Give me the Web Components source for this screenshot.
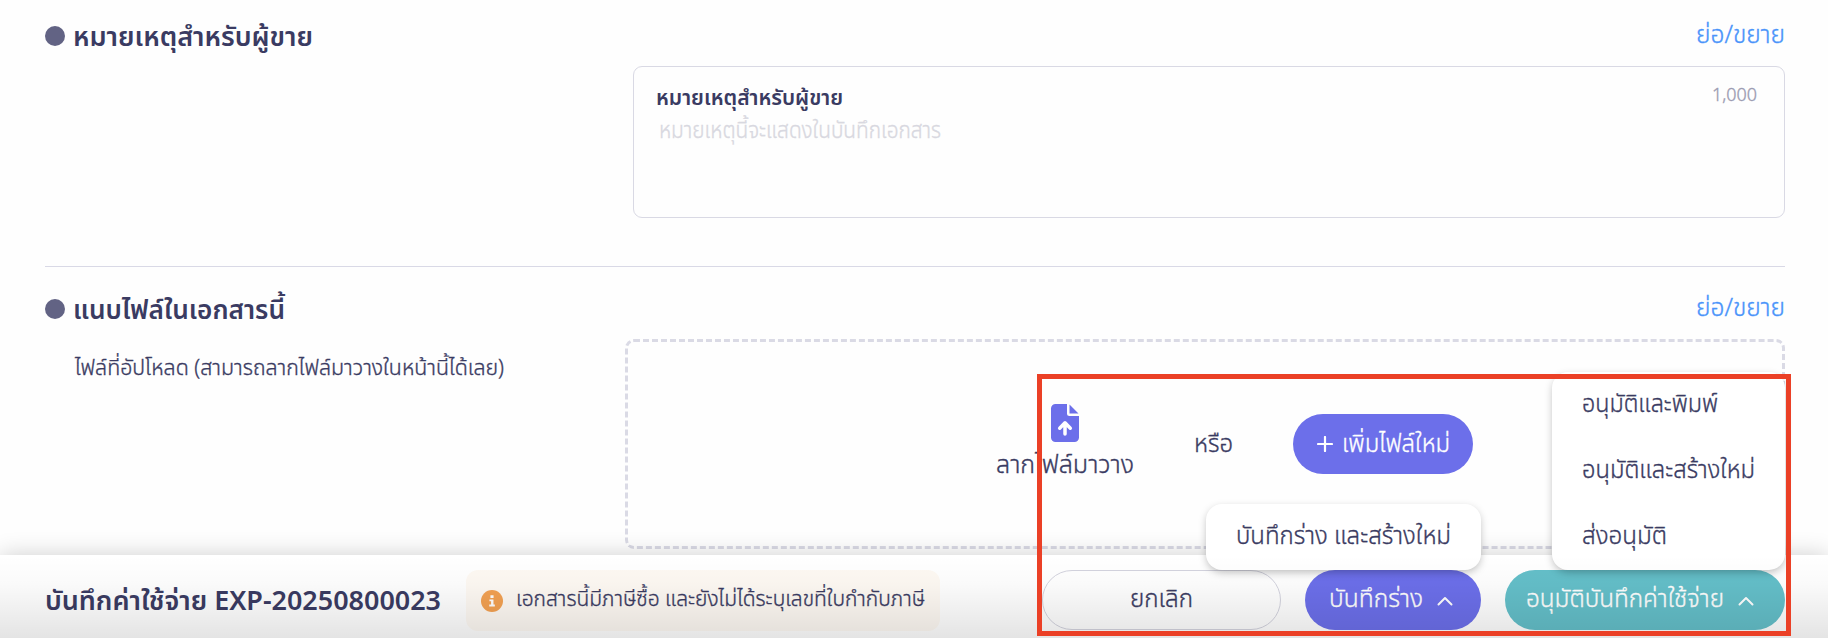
<!DOCTYPE html>
<html lang="th">
<head>
<meta charset="utf-8">
<title>บันทึกค่าใช้จ่าย</title>
<style>
    html, body {
        margin: 0;
        height: 100%;
        overflow: hidden;
    }
    body {
        font-family: "Noto Sans", "Noto Sans Thai", sans-serif;
        font-weight: 300;
        color: #3a3b62;
        background: #fefefe;
    }
</style>
</head>
<body>
<expense-page></expense-page>

<script>
// one line of text, condensed or widened to the width it is given
class TextLine extends HTMLElement {
    constructor() {
        super();
        this.shadow = this.attachShadow({mode: 'open'})
    }

    connectedCallback(){
        const width = Number(this.getAttribute('width'));
        const size = this.getAttribute('size') || 25;
        this.shadow.innerHTML = `
        <style>
        :host {
            display: block;
            flex: none;
            width: ${width}px;
            height: 32px;
            font-size: ${size}px;
            line-height: 28px;
            white-space: nowrap;
            -webkit-text-stroke: var(--stroke, 0.35px) currentColor;
        }
        span {
            display: inline-block;
            transform-origin: 0 50%;
        }
        </style>
        <span><slot></slot></span>
        `;
        const span = this.shadow.querySelector('span');
        const natural = span.getBoundingClientRect().width;
        if (natural > 0) {
            span.style.transform = `scaleX(${width / natural})`;
        }
    }
}

class SectionHeader extends HTMLElement {
    constructor() {
        super();
        this.shadow = this.attachShadow({mode: 'open'})
    }

    connectedCallback(){
        this.shadow.innerHTML = `
        <style>
        :host {
            display: flex;
            align-items: center;
            height: 32px;
        }
        .dot {
            width: 20px;
            height: 20px;
            margin-right: 8px;
            border-radius: 50%;
            background: #626384;
        }
        .title {
            --stroke: 0;
            margin-top: 3px;
            font-weight: 600;
        }
        .toggle {
            margin: -3px 0 0 auto;
            color: #4a94fa;
        }
        </style>
        <span class="dot"></span>
        <text-line class="title" size="27" width="${this.getAttribute('width')}">${this.getAttribute('heading')}</text-line>
        <text-line class="toggle" size="25" width="89">ย่อ/ขยาย</text-line>
        `;
    }
}

class NoteBox extends HTMLElement {
    constructor() {
        super();
        this.shadow = this.attachShadow({mode: 'open'})
    }

    connectedCallback(){
        this.shadow.innerHTML = `
        <style>
        :host {
            display: flex;
            justify-content: space-between;
            box-sizing: border-box;
            width: 1152px;
            height: 152px;
            padding: 16px 27px 0 22px;
            border: 1px solid #d9d9e4;
            border-radius: 9px;
        }
        .label {
            --stroke: 0;
            font-weight: 600;
        }
        .hint {
            margin-left: 3px;
            color: #d8d8e0;
        }
        .count {
            margin-top: -3px;
            color: #9c9cb2;
        }
        </style>
        <div>
            <text-line class="label" size="21.500" width="187">หมายเหตุสำหรับผู้ขาย</text-line>
            <text-line class="hint" size="23" width="282">หมายเหตุนี้จะแสดงในบันทึกเอกสาร</text-line>
        </div>
        <text-line class="count" size="18" width="45">1,000</text-line>
        `;
    }
}

class PillButton extends HTMLElement {
    constructor() {
        super();
        this.shadow = this.attachShadow({mode: 'open'})
    }

    connectedCallback(){
        this.shadow.innerHTML = `
        <style>
        :host {
            position: relative;
            display: flex;
            flex: none;
            align-items: center;
            box-sizing: border-box;
            height: 60px;
            border-radius: 30px;
            color: #ffffff;
            background: #6c6fea;
        }
        :host([kind="outline"]) {
            justify-content: center;
            color: #3a3b62;
            background: none;
            border: 1px solid #d3d3de;
        }
        :host([kind="teal"]) {
            background: #64bfc9;
        }
        </style>
        <slot></slot>
        <slot name="menu"></slot>
        `;
    }
}

// menu that opens upwards from its button
class PopupMenu extends HTMLElement {
    constructor() {
        super();
        this.shadow = this.attachShadow({mode: 'open'})
    }

    connectedCallback(){
        this.shadow.innerHTML = `
        <style>
        :host {
            position: absolute;
            right: 0;
            bottom: 60px;
            display: flex;
            flex-direction: column;
            gap: 34px;
            box-sizing: border-box;
            padding: 16px 30px 16px;
            border-radius: 16px;
            color: #3a3b62;
            background: #ffffff;
            box-shadow: 0 3px 8px -1px rgba(0, 0, 0, 0.28);
        }
        </style>
        <slot></slot>
        `;
    }
}

class DropZone extends HTMLElement {
    constructor() {
        super();
        this.shadow = this.attachShadow({mode: 'open'})
    }

    connectedCallback(){
        this.shadow.innerHTML = `
        <style>
        :host {
            display: flex;
            align-items: center;
            justify-content: center;
            gap: 60px;
            box-sizing: border-box;
            width: 1160px;
            height: 210px;
            padding: 0 0 1px 59px;
            border: 3px dashed #dadae5;
            border-radius: 9px;
        }
        .drop {
            display: flex;
            flex-direction: column;
            align-items: center;
            gap: 7px;
            padding-bottom: 2px;
        }
        svg {
            display: block;
        }
        pill-button {
            width: 180px;
        }
        pill-button svg {
            margin: 0 9px 0 24px;
        }
        </style>
        <div class="drop">
            <svg width="28" height="38" viewBox="0 0 28 38">
                <path fill="#6c6fea" d="M4.500 0H16v9.500a2.500 2.500 0 0 0 2.500 2.500H28V33.500a4.500 4.500 0 0 1-4.500 4.500h-19A4.500 4.500 0 0 1 0 33.500v-29A4.500 4.500 0 0 1 4.500 0zM18.500 .5L27.500 9.500H18.500z"/>
                <path fill="none" stroke="#fff" stroke-width="3.500" stroke-linecap="round" stroke-linejoin="round" d="M14 30V19M8.700 24.200L14 18.800l5.300 5.400"/>
            </svg>
            <text-line width="138">ลากไฟล์มาวาง</text-line>
        </div>
        <text-line width="39">หรือ</text-line>
        <pill-button>
            <svg width="16" height="16" viewBox="0 0 16 16">
                <path fill="none" stroke="#fff" stroke-width="2.200" stroke-linecap="round" d="M8 1v14M1 8h14"/>
            </svg>
            <text-line width="108">เพิ่มไฟล์ใหม่</text-line>
        </pill-button>
        `;
    }
}

class ActionBar extends HTMLElement {
    constructor() {
        super();
        this.shadow = this.attachShadow({mode: 'open'})
    }

    connectedCallback(){
        const caret = `
            <svg class="caret" width="16" height="10" viewBox="0 0 16 10">
                <path fill="none" stroke="#fff" stroke-width="2" stroke-linecap="round" stroke-linejoin="round" d="M1.500 8.500L8 2l6.500 6.500"/>
            </svg>`;
        this.shadow.innerHTML = `
        <style>
        :host {
            position: relative;
            display: flex;
            box-sizing: border-box;
            height: 83px;
            padding: 15px 43px 0 45px;
            background: #ffffff;
            box-shadow: 0 0 22px rgba(0, 0, 0, 0.19);
        }
        /* shade that rises from the bottom edge over the whole bar */
        .shade {
            position: absolute;
            inset: 0;
            background: linear-gradient(rgba(0, 0, 0, 0), rgba(0, 0, 0, 0.018) 35%, rgba(0, 0, 0, 0.105));
            pointer-events: none;
        }
        .title {
            --stroke: 0;
            margin: 16px 25px 0 0;
            font-weight: 600;
        }
        .notice {
            display: flex;
            align-items: center;
            gap: 13px;
            box-sizing: border-box;
            width: 474px;
            height: 61px;
            padding: 0 15px;
            border-radius: 12px;
            background: #fef9f3;
        }
        .notice text-line {
            margin-top: -3px;
        }
        .buttons {
            display: flex;
            gap: 24px;
            margin-left: auto;
        }
        .cancel {
            width: 239px;
        }
        .draft {
            width: 176px;
            padding-left: 24px;
        }
        .approve {
            width: 280px;
            padding-left: 21px;
        }
        .buttons pill-button > text-line {
            margin-top: -2px;
        }
        .caret {
            margin: 2px 0 0 14px;
        }
        .draft popup-menu {
            width: 275px;
            height: 66px;
        }
        .approve popup-menu {
            width: 233px;
            height: 198px;
        }
        </style>
        <text-line class="title" size="26.500" width="396">บันทึกค่าใช้จ่าย EXP-20250800023</text-line>
        <div class="notice">
            <svg width="24" height="24" viewBox="0 0 24 24">
                <circle cx="12" cy="12" r="12" fill="#f3a152"/>
                <path fill="#fff" d="M10.300 5.800h3.400v3h-3.400zM9.200 10.300h4.400v5.600h1.500v2H9v-2h2v-3.600H9.200z"/>
            </svg>
            <text-line size="22" width="409">เอกสารนี้มีภาษีซื้อ และยังไม่ได้ระบุเลขที่ใบกำกับภาษี</text-line>
        </div>
        <div class="buttons">
            <pill-button class="cancel" kind="outline">
                <text-line width="63">ยกเลิก</text-line>
            </pill-button>
            <pill-button class="draft">
                <text-line width="94">บันทึกร่าง</text-line>${caret}
                <popup-menu slot="menu">
                    <text-line width="215">บันทึกร่าง และสร้างใหม่</text-line>
                </popup-menu>
            </pill-button>
            <pill-button class="approve" kind="teal">
                <text-line width="198">อนุมัติบันทึกค่าใช้จ่าย</text-line>${caret}
                <popup-menu slot="menu">
                    <text-line width="136">อนุมัติและพิมพ์</text-line>
                    <text-line width="173">อนุมัติและสร้างใหม่</text-line>
                    <text-line width="85">ส่งอนุมัติ</text-line>
                </popup-menu>
            </pill-button>
        </div>
        <div class="shade"></div>
        `;
    }
}

class ExpensePage extends HTMLElement {
    constructor() {
        super();
        this.shadow = this.attachShadow({mode: 'open'})
    }

    connectedCallback(){
        this.shadow.innerHTML = `
        <style>
        :host {
            position: relative;
            display: flex;
            flex-direction: column;
            width: 1828px;
            height: 638px;
            overflow: hidden;
        }
        main {
            height: 555px;
            box-sizing: border-box;
            padding: 20px 43px 0 45px;
        }
        note-box {
            margin: 14px 0 48px auto;
        }
        hr {
            height: 1px;
            margin: 0 0 26px;
            border: 0;
            background: #d9d9e6;
        }
        .files {
            display: flex;
            justify-content: space-between;
            padding: 14px 0 0 30px;
        }
        .files > text-line {
            margin-top: 13px;
        }
        /* highlight frame round the buttons */
        .frame {
            position: absolute;
            left: 1037px;
            top: 374px;
            box-sizing: border-box;
            width: 754px;
            height: 262px;
            border: 5px solid #eb4026;
        }
        </style>
        <main>
            <section-header heading="หมายเหตุสำหรับผู้ขาย" width="240"></section-header>
            <note-box></note-box>
            <hr>
            <section-header heading="แนบไฟล์ในเอกสารนี้" width="212"></section-header>
            <div class="files">
                <text-line size="22" width="429">ไฟล์ที่อัปโหลด (สามารถลากไฟล์มาวางในหน้านี้ได้เลย)</text-line>
                <drop-zone></drop-zone>
            </div>
        </main>
        <action-bar></action-bar>
        <div class="frame"></div>
        `;
    }
}

customElements.define('text-line', TextLine);
customElements.define('section-header', SectionHeader);
customElements.define('note-box', NoteBox);
customElements.define('pill-button', PillButton);
customElements.define('popup-menu', PopupMenu);
customElements.define('drop-zone', DropZone);
customElements.define('action-bar', ActionBar);
customElements.define('expense-page', ExpensePage);
</script>
</body>
</html>
